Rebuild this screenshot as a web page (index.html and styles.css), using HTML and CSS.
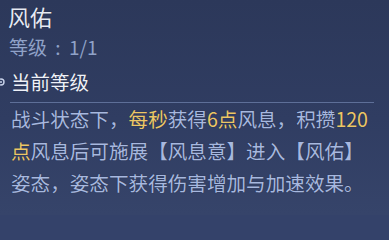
FILE: index.html
```html
<!DOCTYPE html>
<html lang="zh">
<head>
<meta charset="utf-8">
<link rel="stylesheet" href="styles.css">
</head>
<body>
<div class="panel">
  <div class="title">风佑</div>
  <div class="level">等级<span class="colon">:</span>1/1</div>
  <div class="section">
    <svg class="bullet" width="8" height="10" viewBox="0 0 8 10"><circle cx="2" cy="5" r="3" fill="none" stroke="#c9d3ea" stroke-width="1.4"/><circle cx="2" cy="5" r="1" fill="#c9d3ea"/></svg>
    <span class="section-name">当前等级</span>
  </div>
  <div class="divider"></div>
  <p class="desc">战斗状态下，<span class="hl">每秒</span>获得<span class="hl">6点</span>风息，积攒<span class="hl">120</span><br><span class="hl">点</span>风息后可施展【风息意】进入【风佑】<br>姿态，姿态下获得伤害增加与加速效果。</p>
</div>
</body>
</html>
```

FILE: styles.css
```css
html, body {
  margin: 0;
  padding: 0;
  background: #34426a;
}
body {
  width: 389px;
  height: 215px;
  overflow: hidden;
  font-family: "Noto Sans CJK SC", "Noto Sans", sans-serif;
  background: linear-gradient(180deg, #2c385a 0%, #303d62 55%, #36446a 100%);
}
.panel {
  display: flex;
  flex-direction: column;
  height: 215px;
}
.title {
  padding-left: 8px;
  font-size: 22px;
  line-height: 32px;
  color: #e6eaf4;
  text-shadow: 0 0 1px rgba(0, 0, 0, 0.4);
}
.level {
  padding-left: 9px;
  font-size: 19px;
  line-height: 30px;
  color: #90a2c8;
}
.colon {
  display: inline-block;
  width: 22px;
  text-align: center;
}
.section {
  display: flex;
  align-items: center;
  height: 40px;
}
.bullet {
  flex: none;
  margin-left: -1px;
  margin-right: 4px;
}
.section-name {
  font-size: 19.5px;
  line-height: 40px;
  color: #eef1f8;
  text-shadow: 0 0 1px rgba(0, 0, 0, 0.4);
}
.divider {
  margin-left: 10px;
  width: 364px;
  height: 1px;
  background: #5e6f98;
}
.desc {
  margin: 0;
  padding-left: 11px;
  font-size: 19.6px;
  line-height: 32px;
  color: #a7b8df;
  white-space: nowrap;
  text-shadow: 0 0 1px rgba(0, 0, 0, 0.35);
}
.hl {
  color: #ecc766;
}
```
